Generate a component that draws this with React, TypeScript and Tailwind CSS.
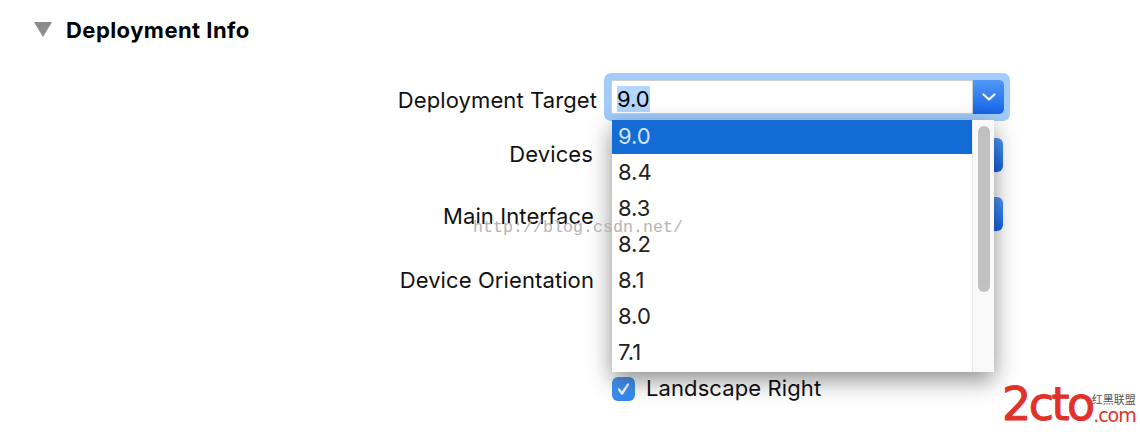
import React from "react";

const versions = ["8.4", "8.3", "8.2", "8.1", "8.0", "7.1"];

function Row({ label, pr, h, children }: { label: string; pr: string; h: string; children?: React.ReactNode }) {
  return (
    <div className={`flex items-center ${h}`}>
      <div className={`w-[604px] shrink-0 text-right text-[22px] tracking-[0.1px] text-[#111] ${pr}`}>{label}</div>
      <div className="flex-1 flex items-center">{children}</div>
    </div>
  );
}

export default function App() {
  return (
    <div className="relative w-[1140px] h-[432px] overflow-hidden bg-white font-['Inter','Liberation_Sans',sans-serif]">
      <div className="flex items-center h-[60px] pl-[34px]">
        <svg width="18" height="15" viewBox="0 0 18 15" className="mr-[14px] mb-[1px]">
          <polygon points="0,0 18,0 9,15" fill="#8c8c8c" />
        </svg>
        <span className="text-[22px] font-bold tracking-[0.45px] text-black">Deployment Info</span>
      </div>

      <div className="flex flex-col pt-[13px]">
        <Row label="Deployment Target" pr="pr-[7px] pt-[7px]" h="h-[48px]">
          <div className="w-[406px] h-[48px] rounded-[7px] bg-[#a3ccfb] p-[7px] flex">
            <div className="flex-1 flex items-center rounded-[2px] bg-white border border-[#cfcfcf] pl-[5px]">
              <span className="bg-[#b3d7ff] text-[22px] leading-[26px] text-black mt-[4px]">9.0</span>
            </div>
            <div className="w-[31px] -mr-px flex items-center justify-center rounded-r-[5px] bg-gradient-to-b from-[#4f98f7] to-[#1463e6]">
              <svg width="16" height="10" viewBox="0 0 16 10" fill="none" stroke="white" strokeWidth="2.2" strokeLinecap="round" strokeLinejoin="round">
                <path d="M2.5 2.5l5.5 5 5.5-5" />
              </svg>
            </div>
          </div>
        </Row>
        <Row label="Devices" pr="pr-[11px] pb-[2px]" h="h-[34px] mt-[17px]">
          <div className="w-[390px] h-[34px] ml-[9px] rounded-[6px] bg-gradient-to-b from-[#4f98f7] to-[#1463e6]" />
        </Row>
        <Row label="Main Interface" pr="pr-[10px] pt-[4px]" h="h-[34px] mt-[25px]">
          <div className="w-[390px] h-[34px] ml-[9px] rounded-[6px] bg-gradient-to-b from-[#4f98f7] to-[#1463e6]" />
        </Row>
        <Row label="Device Orientation" pr="pr-[10px] pb-[2px]" h="h-[36px] mt-[32px]" />
        <div className="flex items-center h-[24px] pl-[612px] mt-[78px]">
          <div className="w-[23px] h-[24px] rounded-[6px] bg-gradient-to-b from-[#4a9af6] to-[#3288f0] flex items-center justify-center">
            <svg width="15" height="14" viewBox="0 0 15 14" fill="none" stroke="#f2f7fe" strokeWidth="2.4" strokeLinecap="round" strokeLinejoin="round">
              <path d="M3 7.5l3 4 6-9" />
            </svg>
          </div>
          <span className="ml-[11px] text-[22px] tracking-[0.1px] text-[#111] mb-[2px]">Landscape Right</span>
        </div>
      </div>

      <div className="absolute left-[612px] top-[120px] w-[382px] h-[252px] bg-white flex shadow-[0_8px_22px_rgba(0,0,0,0.45)]">
        <div className="w-[360px] flex flex-col">
          <div className="h-[34px] bg-[#136cd6] pl-[6px] flex items-center text-[22px] text-[#d6e5f8] pb-[1px]">9.0</div>
          <div className="flex flex-col">
            {versions.map((v) => (
              <div key={v} className="h-[36px] pl-[6px] flex items-center text-[22px] text-[#222]">{v}</div>
            ))}
          </div>
        </div>
        <div className="w-[22px] bg-[#f9f9f9] border-l border-[#e9e9e9] pt-[6px] pl-[5px]">
          <div className="w-[12px] h-[166px] rounded-full bg-[#c0c0c0]" />
        </div>
      </div>

      <div className="absolute left-[473px] top-[217px] font-['Liberation_Mono',monospace] text-[16.67px] leading-[22px] text-[#b4b4b4]">
        http://blog.csdn.net/
      </div>

      <div className="absolute left-[1002px] top-[380px] flex items-end text-[#e0322a]">
        <span className="font-['DejaVu_Sans',sans-serif] text-[46px] leading-[48px] tracking-[-2.5px] [-webkit-text-stroke:1px_#e0322a]">2cto</span>
        <div className="flex flex-col items-end ml-[-1px] mb-[3px]">
          <span className="font-['Noto_Sans_CJK_SC',sans-serif] text-[11px] leading-[14px] text-[#555]">红黑联盟</span>
          <span className="font-['DejaVu_Sans',sans-serif] text-[19px] leading-[19px] tracking-[-1px]">.com</span>
        </div>
      </div>
    </div>
  );
}
